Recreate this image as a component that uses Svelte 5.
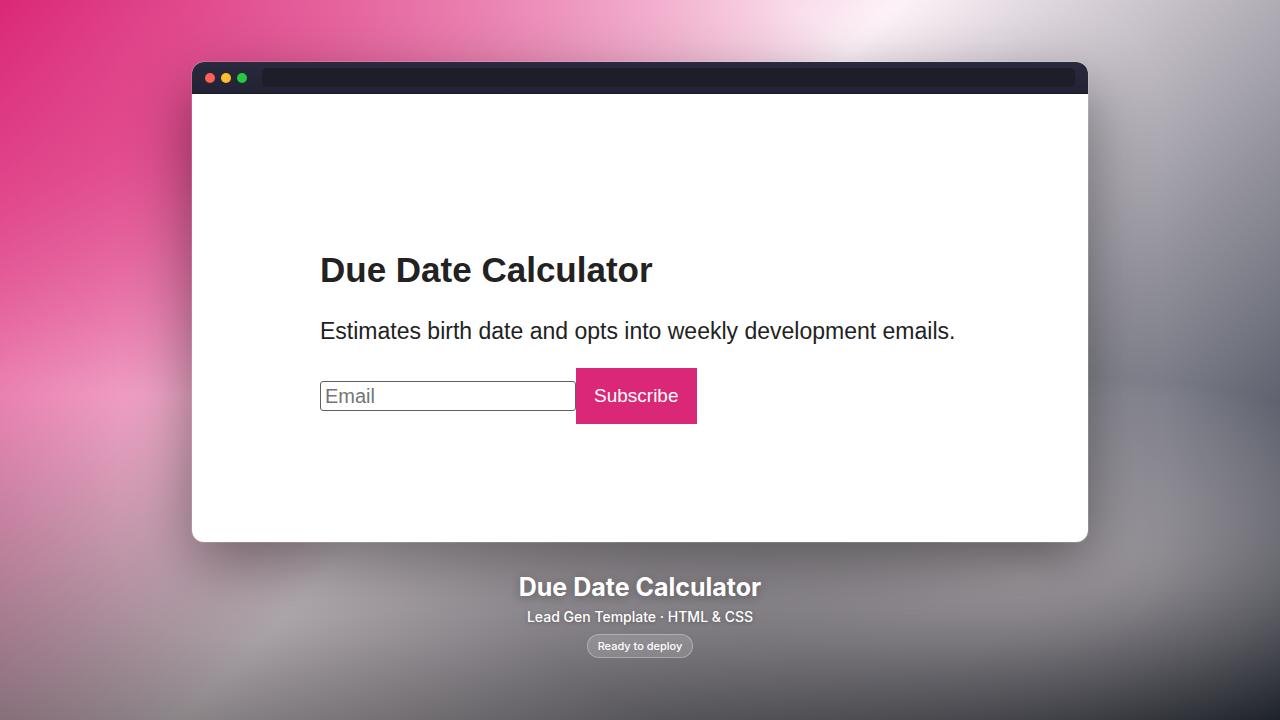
<script lang="ts">
  const title = 'Due Date Calculator';
  const dots = ['#ff5f57', '#febc2e', '#28c840'];

  let email = $state('');

  function handleSubmit(event: SubmitEvent) {
    event.preventDefault();
    email = '';
  }
</script>

<div class="stage">
  <section class="window">
    <div class="titlebar">
      <div class="dots">
        {#each dots as color}
          <span class="dot" style="background: {color}"></span>
        {/each}
      </div>
      <div class="address"></div>
    </div>

    <main class="page">
      <div class="content">
        <h1>{title}</h1>
        <p>Estimates birth date and opts into weekly development emails.</p>
        <form onsubmit={handleSubmit}>
          <input type="email" placeholder="Email" aria-label="Email" bind:value={email} />
          <button type="submit">Subscribe</button>
        </form>
      </div>
    </main>
  </section>

  <footer class="caption">
    <h2>{title}</h2>
    <p>Lead Gen Template · HTML &amp; CSS</p>
    <span class="badge">Ready to deploy</span>
  </footer>
</div>

<style>
  :global(body) {
    margin: 0;
  }

  .stage {
    box-sizing: border-box;
    min-height: 100vh;
    display: flex;
    flex-direction: column;
    align-items: center;
    justify-content: center;
    gap: 28px;
    font-family: Inter, sans-serif;
    background:
      linear-gradient(to bottom, transparent 55%, rgba(0, 0, 0, 0.45) 100%),
      radial-gradient(ellipse 40% 28% at 80% 80%, rgba(253, 242, 248, 0.8), rgba(253, 242, 248, 0) 100%),
      radial-gradient(ellipse 50% 35% at 20% 20%, rgba(219, 39, 119, 0.5), rgba(219, 39, 119, 0) 100%),
      linear-gradient(135deg, #db2777 0%, #fdf2f8 45%, #1f2937 100%);
  }

  .window {
    width: 70%;
    border-radius: 12px;
    overflow: hidden;
    background: #fff;
    box-shadow:
      0 0 0 1px rgba(255, 255, 255, 0.15),
      0 24px 64px rgba(0, 0, 0, 0.45);
  }

  .titlebar {
    box-sizing: border-box;
    height: 32px;
    display: flex;
    align-items: center;
    gap: 15px;
    padding: 0 13px;
    background: linear-gradient(#2a2a3e, #222234);
    border-bottom: 1px solid #1b1b2b;
  }

  .dots {
    display: flex;
    gap: 6px;
  }

  .dot {
    width: 10px;
    height: 10px;
    border-radius: 50%;
  }

  .address {
    flex: 1;
    height: 19px;
    border-radius: 5px;
    background: #1e1e2a;
  }

  .page {
    box-sizing: border-box;
    min-height: 448px;
    display: flex;
    flex-direction: column;
    justify-content: center;
    align-items: center;
    padding-top: 38px;
    font-family: "Liberation Sans", Arial, sans-serif;
    color: #222;
  }

  .content {
    width: 100%;
    max-width: 640px;
  }

  h1 {
    margin: 0 0 24px;
    font-size: 35px;
    line-height: 40px;
  }

  .content p {
    margin: 0 0 20px;
    font-size: 23px;
    line-height: 34px;
  }

  form {
    display: flex;
    align-items: center;
  }

  input {
    box-sizing: border-box;
    width: 256px;
    height: 30px;
    padding: 0 4px;
    border: 1px solid #606060;
    border-radius: 3px;
    font: 20px "Liberation Sans", Arial, sans-serif;
  }

  input::placeholder {
    color: #757575;
  }

  button {
    height: 56px;
    padding: 0 18px;
    border: 0;
    background: #db2777;
    color: #fff;
    font: 19px "Liberation Sans", Arial, sans-serif;
    cursor: pointer;
  }

  .caption {
    display: flex;
    flex-direction: column;
    align-items: center;
    color: #fff;
  }

  h2 {
    margin: 0 0 3px;
    font-size: 25px;
    line-height: 34px;
    font-weight: 700;
    text-shadow: 0 2px 8px rgba(0, 0, 0, 0.3);
  }

  .caption p {
    margin: 0 0 7px;
    font-size: 14px;
    line-height: 20px;
    font-weight: 500;
    text-shadow: 0 1px 4px rgba(0, 0, 0, 0.3);
  }

  .badge {
    padding: 4px 10px;
    border: 1px solid rgba(255, 255, 255, 0.3);
    border-radius: 12px;
    background: rgba(255, 255, 255, 0.15);
    font-size: 11px;
    line-height: 14px;
    font-weight: 500;
  }
</style>
